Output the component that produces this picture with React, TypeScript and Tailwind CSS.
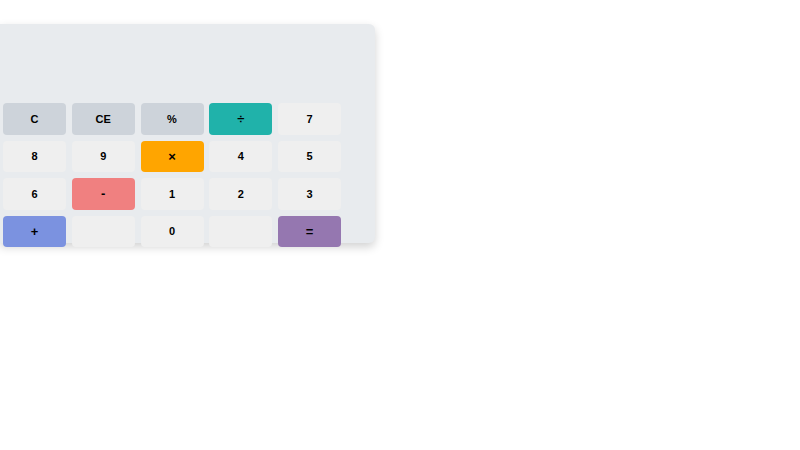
import React from "react";

type K = { l: string; c: string; op?: boolean };

const keys: K[] = [
  { l: "C", c: "bg-[#cdd3da]" },
  { l: "CE", c: "bg-[#cdd3da]" },
  { l: "%", c: "bg-[#cdd3da]" },
  { l: "÷", c: "bg-[#20b2aa]", op: true },
  { l: "7", c: "bg-[#efefef]" },
  { l: "8", c: "bg-[#efefef]" },
  { l: "9", c: "bg-[#efefef]" },
  { l: "×", c: "bg-[#ffa500]", op: true },
  { l: "4", c: "bg-[#efefef]" },
  { l: "5", c: "bg-[#efefef]" },
  { l: "6", c: "bg-[#efefef]" },
  { l: "-", c: "bg-[#f08080]", op: true },
  { l: "1", c: "bg-[#efefef]" },
  { l: "2", c: "bg-[#efefef]" },
  { l: "3", c: "bg-[#efefef]" },
  { l: "+", c: "bg-[#7b92e0]", op: true },
  { l: "", c: "bg-[#efefef]" },
  { l: "0", c: "bg-[#efefef]" },
  { l: "", c: "bg-[#efefef]" },
  { l: "=", c: "bg-[#9577b0]", op: true },
];

export default function App() {
  return (
    <div className="w-[800px] h-[450px] bg-white pt-[24px]" style={{ fontFamily: '"Liberation Sans", Arial, sans-serif' }}>
      <div className="w-[375px] h-[219px] bg-[#e8ebee] rounded-r-md shadow-[0_4px_10px_rgba(0,0,0,0.18)] flex flex-col">
        <div className="h-[79px] shrink-0" />
        <div className="grid grid-cols-[repeat(5,63px)] auto-rows-[31.5px] gap-x-[5.75px] gap-y-[6px] pl-[3px]">
          {keys.map((k, i) => (
            <div
              key={i}
              className={`${k.c} rounded-[4px] flex items-center justify-center ${k.op ? "text-[13px]" : "text-[11px]"} font-bold text-black`}
            >
              {k.l}
            </div>
          ))}
        </div>
      </div>
    </div>
  );
}
